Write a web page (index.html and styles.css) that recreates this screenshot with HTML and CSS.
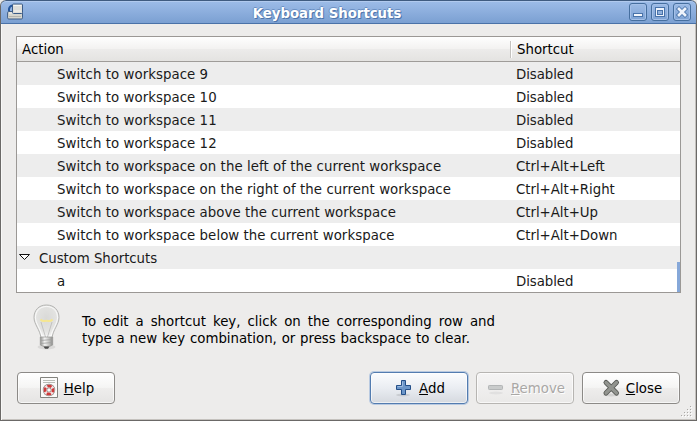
FILE: index.html
```html
<!DOCTYPE html>
<html lang="en">
<head>
<meta charset="utf-8">
<title>Keyboard Shortcuts</title>
<link rel="stylesheet" href="styles.css">
</head>
<body>
<div class="window">
  <header class="titlebar">
    <svg class="app-icon" width="18" height="18" viewBox="0 0 18 18">
      <path d="M2 8.500V6Q2.500 3 5.500 2.500" fill="none" stroke="#24569c" stroke-width="2"/>
      <rect x=".6" y="8.500" width="14.900" height="7.500" rx="1.200" fill="#d6d6cf" stroke="#3f5d85"/>
      <path d="M2 10h12" stroke="#f0f0ec"/><path d="M2 13.500h12" stroke="#b4b4ae"/>
      <rect x="5.500" y="1" width="10" height="9.500" rx="1" fill="#dededa" stroke="#3b5c88"/>
      <path d="M6.500 2.500h8M7 8h7.500" stroke="#f5f5f2"/>
    </svg>
    <h1>Keyboard Shortcuts</h1>
    <div class="controls">
      <button class="ctl" aria-label="Minimize"><svg width="18" height="18" viewBox="0 0 18 18"><rect x="4.500" y="10.500" width="9" height="3" fill="#f4f7fc" stroke="#4973aa"/></svg></button>
      <button class="ctl" aria-label="Maximize"><svg width="18" height="18" viewBox="0 0 18 18"><rect x="4" y="4" width="10" height="10" fill="#4973aa"/><rect x="5" y="5" width="8" height="8" fill="#eef3fb"/><rect x="6.500" y="7.500" width="5" height="4" fill="#8fb0dc" stroke="#4973aa"/></svg></button>
      <button class="ctl" aria-label="Close"><svg width="18" height="18" viewBox="0 0 18 18"><path d="M6 6l6 6m0-6l-6 6" stroke="#4973aa" stroke-width="4.400" stroke-linecap="square"/><path d="M6 6l6 6m0-6l-6 6" stroke="#eef3fb" stroke-width="2.700" stroke-linecap="square"/></svg></button>
    </div>
  </header>
  <main class="content">
    <div class="list">
      <div class="head"><span class="action">Action</span><span class="shortcut">Shortcut</span></div>
      <div class="row"><span class="action">Switch to workspace 9</span><span class="key">Disabled</span></div>
      <div class="row"><span class="action">Switch to workspace 10</span><span class="key">Disabled</span></div>
      <div class="row"><span class="action">Switch to workspace 11</span><span class="key">Disabled</span></div>
      <div class="row"><span class="action">Switch to workspace 12</span><span class="key">Disabled</span></div>
      <div class="row"><span class="action">Switch to workspace on the left of the current workspace</span><span class="key combo">Ctrl+Alt+Left</span></div>
      <div class="row"><span class="action">Switch to workspace on the right of the current workspace</span><span class="key combo">Ctrl+Alt+Right</span></div>
      <div class="row"><span class="action">Switch to workspace above the current workspace</span><span class="key combo">Ctrl+Alt+Up</span></div>
      <div class="row"><span class="action">Switch to workspace below the current workspace</span><span class="key combo">Ctrl+Alt+Down</span></div>
      <div class="row group"><svg width="22" height="23" viewBox="0 0 22 23"><path d="M2.500 8.500h10l-5 5z" fill="#fff" stroke="#111"/></svg><span class="action">Custom Shortcuts</span></div>
      <div class="row"><span class="action">a</span><span class="key">Disabled</span></div>
      <div class="scroll-thumb"></div>
    </div>
    <div class="hint">
      <svg width="32" height="50" viewBox="0 0 32 50">
        <defs>
          <radialGradient id="glass" cx=".5" cy=".4" r=".6"><stop offset="0" stop-color="#d9d9d7"/><stop offset=".65" stop-color="#e3e3e1"/><stop offset="1" stop-color="#f6f6f5"/></radialGradient>
          <linearGradient id="base"><stop offset="0" stop-color="#8f8f8d"/><stop offset=".35" stop-color="#f4f4f3"/><stop offset=".7" stop-color="#c4c4c2"/><stop offset="1" stop-color="#8a8a88"/></linearGradient>
        </defs>
        <ellipse cx="15.500" cy="43" rx="9" ry="2.500" opacity=".08"/>
        <path d="M15.500 1C7.500 1 3 6.500 3 13.500c0 7 6 12 7 20.500h11c1-8.500 7-13.500 7-20.500C28 6.500 23.500 1 15.500 1z" fill="url(#glass)" stroke="#b4b4b2"/>
        <path d="M15.500 2.500C8.500 2.500 4.500 7.500 4.500 13.500c0 6 5 11 6.500 18.500h9c1.500-7.500 6.500-12.500 6.500-18.500 0-6-4-11-11-11z" fill="none" stroke="#fff" opacity=".8"/>
        <path d="M10 18l4.500 15M21 18l-4.500 15" fill="none" stroke="#b9b9b7" stroke-width=".8"/>
        <path d="M9.500 15.500q2 2 4 1.500t4 0 4-1.500" fill="none" stroke="#f5e691" stroke-width="2"/>
        <path d="M9.300 33h12.400v8q-2 1.500-6.200 1.500T9.300 41z" fill="url(#base)" stroke="#999997" stroke-width=".7"/>
        <path d="M9.500 36.500l12-1M9.500 39.500l12-1" stroke="#a0a09e" stroke-width=".8"/>
        <path d="M12.500 42.500h6L17 44.800h-3z" fill="#4a4a4a"/>
      </svg>
      <p><span>To edit a shortcut key, click on the corresponding row and</span><span class="last">type a new key combination, or press backspace to clear.</span></p>
    </div>
    <footer class="actions">
      <button class="btn help">
        <svg width="20" height="24" viewBox="0 0 20 24"><path d="M1.500 1.500h17v20h-17z" fill="#fbfbfa" stroke="#83837e"/><path d="M4 4.500h12M4 6.500h12" stroke="#b9bdb6"/><circle cx="10" cy="14" r="4" fill="none" stroke="#858580" stroke-width="4.400"/><circle cx="10" cy="14" r="4" fill="none" stroke="#f4dede" stroke-width="3.200"/><circle cx="10" cy="14" r="4" fill="none" stroke="#cf3a3a" stroke-width="2.600" stroke-dasharray="4.283 2" stroke-dashoffset="2.141"/></svg>
        <span><u>H</u>elp</span>
      </button>
      <button class="btn add">
        <svg width="20" height="24" viewBox="0 0 20 24"><ellipse cx="9" cy="19" rx="7" ry="1.500" opacity=".1"/><path d="M7.500 4.500h4v5h5v4h-5v5h-4v-5h-5v-4h5z" fill="#6c96c9" stroke="#244f88" stroke-linejoin="round"/><path d="M8.500 5.500v5H3.500" fill="none" stroke="#9dbbe0"/></svg>
        <span><u>A</u>dd</span>
      </button>
      <button class="btn remove" disabled>
        <svg width="20" height="24" viewBox="0 0 20 24"><ellipse cx="10" cy="17" rx="7" ry="1.500" opacity=".05"/><rect x="2.500" y="9.500" width="14" height="4" rx=".8" fill="#c9cbcb" stroke="#b3b5b6"/></svg>
        <span><u>R</u>emove</span>
      </button>
      <button class="btn close">
        <svg width="20" height="24" viewBox="0 0 20 24"><ellipse cx="10" cy="19" rx="8" ry="1.500" opacity=".1"/><path d="M5 6.500l10.500 10.500m0-10.500L5 17" stroke="#555753" stroke-width="5" stroke-linecap="round"/><path d="M5 6.500l10.500 10.500m0-10.500L5 17" stroke="#92948f" stroke-width="3.200" stroke-linecap="round"/></svg>
        <span><u>C</u>lose</span>
      </button>
    </footer>
  </main>
  <svg class="grip" width="12" height="12" viewBox="0 0 12 12"><path d="M9 1h1v1h-1zM6 4h1v1h-1zM9 4h1v1h-1zM3 7h1v1h-1zM6 7h1v1h-1zM9 7h1v1h-1zM0 10h1v1h-1zM3 10h1v1h-1zM6 10h1v1h-1zM9 10h1v1h-1z" fill="#aaa8a5"/><path d="M10 2h1v1h-1zM7 5h1v1h-1zM10 5h1v1h-1zM4 8h1v1h-1zM7 8h1v1h-1zM10 8h1v1h-1zM1 11h1v1h-1zM4 11h1v1h-1zM7 11h1v1h-1zM10 11h1v1h-1z" fill="#fff"/></svg>
</div>
</body>
</html>
```
FILE: styles.css
```css
* { box-sizing: border-box; }
body {
  margin: 0;
  background: #e8e8e8;
  font: 13.333px/17px "DejaVu Sans", sans-serif;
  color: #1a1a1a;
}
.window {
  position: relative;
  width: 697px;
  height: 421px;
  background: #edeceb;
  border: 1px solid #6b6967;
  border-top: 0;
  border-radius: 6px 6px 0 0;
  box-shadow: inset 1px 0 #f8f8f7, inset -1px -1px #c5c2be;
  overflow: hidden;
}
.titlebar {
  display: grid;
  grid-template-columns: 22px 1fr 66px;
  align-items: center;
  height: 24px;
  margin: 0 -1px;
  padding: 0 5px 0 6px;
  background: linear-gradient(#9dbce8, #7ba0d2);
  border: 1px solid #42658f;
  border-top-color: #3f5b80;
  border-bottom-color: #4a72a8;
  border-radius: 6px 6px 0 0;
  box-shadow: inset 0 1px #b1caee;
}
.app-icon { display: block; }
h1 {
  margin: 0;
  padding-top: 2px;
  font-size: 13.333px;
  line-height: 20px;
  letter-spacing: -.03px;
  text-align: center;
  color: #fff;
  text-shadow: 1px 1px #4d75ab, -1px 0 #6b90c4, 0 -1px #6b90c4;
}
.titlebar h1 { padding-top: 3px; line-height: 19px; }
.controls { display: flex; gap: 4px; justify-content: flex-end; }
.ctl {
  width: 18px;
  height: 18px;
  padding: 0;
  border: 1px solid #466f9f;
  border-radius: 3px;
  background: linear-gradient(#9bbae5, #7fa3d4);
  box-shadow: inset 0 0 0 1px #a4c0e8;
}
.ctl svg { display: block; margin: -1px; }
.content { padding: 12px 16px 0 15px; }
.list {
  position: relative;
  width: 665px;
  height: 257px;
  border: 1px solid #9b9895;
  background: #fff;
}
.head, .row { display: flex; align-items: center; }
.head {
  height: 25px;
  border-bottom: 1px solid #9f9c99;
  background: linear-gradient(#fefefe, #f3f2f1 48%, #ecebea 52%, #e4e3e1);
  color: #000;
}
.head .action { width: 493px; padding-left: 5px; }
.head .shortcut { height: 17px; padding-left: 6px; border-left: 1px solid #c4c2bf; box-shadow: inset 1px 0 #fff; }
.row { height: 23px; }
.row:nth-child(even) { background: #ededed; }
.row span { padding-top: 2px; }
.row .action { width: 499px; padding-left: 40px; white-space: nowrap; letter-spacing: .055px; }
.row .key { letter-spacing: -.07px; }
.row .combo { letter-spacing: -.03px; }
.row.group .action { width: auto; padding-left: 0; letter-spacing: -.06px; }
.scroll-thumb { position: absolute; right: 0; bottom: 0; width: 3px; height: 30px; background: #86a8d9; }
.hint { display: flex; margin: 11px 0 0 15px; height: 50px; }
.hint p { width: 413px; margin: 9px 0 0 19px; color: #000; }
.hint p span { display: block; text-align-last: justify; white-space: nowrap; }
.hint p .last { width: 388px; letter-spacing: -.02px; }
.actions { display: flex; gap: 8px; margin: 18px 0 0 1px; }
.btn {
  display: flex;
  align-items: center;
  justify-content: center;
  gap: 5px;
  width: 98px;
  height: 32px;
  padding: 0 0 0 1px;
  border: 1px solid #8c8a87;
  border-radius: 4px;
  background: linear-gradient(#fff, #f5f5f4 48%, #eeedec 52%, #e5e4e3);
  box-shadow: inset 0 0 0 1px rgba(255,255,255,.65);
  font: inherit;
  color: #000;
}
.btn u { text-decoration: underline 1px; text-underline-offset: 1px; text-decoration-skip-ink: none; }
.help { margin-right: auto; }
.add { border-color: #537cb0; background: linear-gradient(#fbfcfe, #eaedf2 50%, #d5d9df); box-shadow: 0 0 0 1px #b9cae1, inset 0 0 0 1px #fff9; }
.remove { border-color: #b7b5b2; background: linear-gradient(#f5f4f4, #eae9e8); color: #aaa8a6; text-shadow: 1px 1px #fff; }
.grip { position: absolute; right: 3px; bottom: 3px; }
```
